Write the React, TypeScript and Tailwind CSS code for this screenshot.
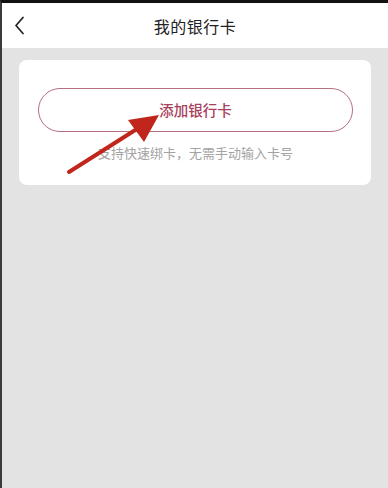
export default function App() {
  return (
    <div
      className="relative w-[388px] h-[488px] flex flex-col bg-[#e3e3e3] border-l-2 border-l-[#3a3a3a] border-t-[3px] border-t-[#111] overflow-hidden"
      style={{ fontFamily: '"Noto Sans CJK SC", "Noto Sans", sans-serif' }}
    >
      {/* Header */}
      <div className="relative h-[45px] shrink-0 bg-white flex items-center justify-center">
        <svg className="absolute left-[12px] top-[13px]" width="12" height="19" viewBox="0 0 12 19">
          <polyline points="9,1.5 2,9.5 9,17.5" fill="none" stroke="#222" strokeWidth="1.7" strokeLinecap="round" strokeLinejoin="round" />
        </svg>
        <span className="text-[16px] text-[#222] tracking-[0.5px]">我的银行卡</span>
      </div>

      {/* Content */}
      <div className="pt-[12px] pl-[17px] pr-[17px]">
        <div className="bg-white rounded-[8px] pt-[28px] pl-[19px] pr-[18px] pb-[23px] flex flex-col items-center">
          <button className="w-full h-[44px] rounded-full border border-[#b5707f] flex items-center justify-center text-[14.5px] font-medium text-[#a8405c]">
            添加银行卡
          </button>
          <p className="mt-[12px] text-[13px] leading-[18px] text-[#a3a3a3]">支持快速绑卡，无需手动输入卡号</p>
        </div>
      </div>

      {/* Annotation arrow */}
      <svg className="absolute left-0 top-0 pointer-events-none" width="388" height="488" viewBox="0 0 388 488">
        <line x1="67" y1="169" x2="138" y2="124" stroke="#c0261c" strokeWidth="4" strokeLinecap="round" />
        <polygon points="157,112 126,117 142,139" fill="#c0261c" />
      </svg>
    </div>
  );
}
